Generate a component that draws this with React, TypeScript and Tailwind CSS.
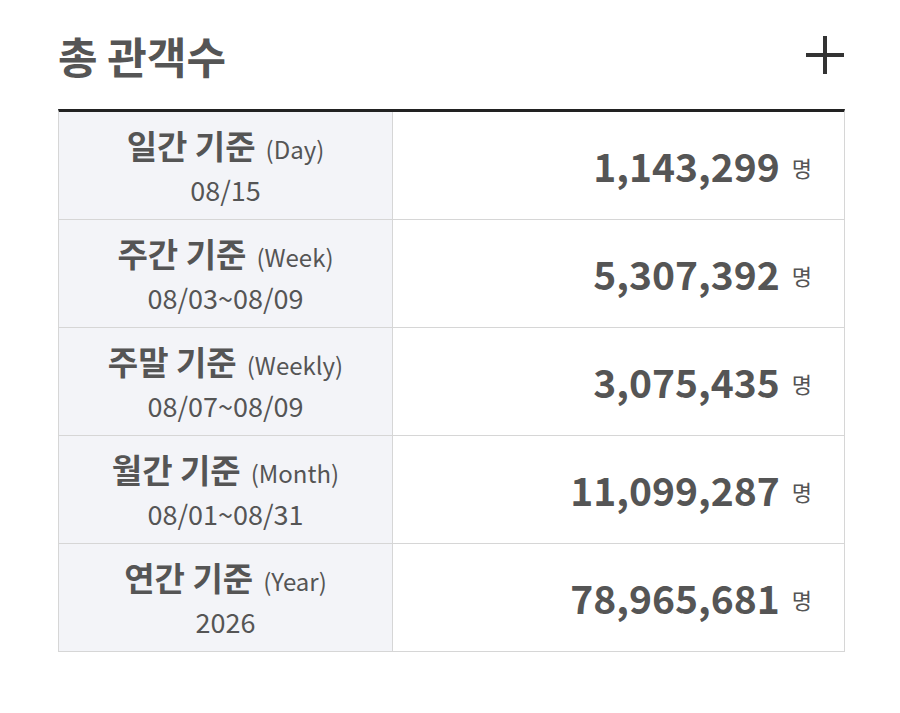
import React from "react";

const rows = [
  { ko: "일간 기준", en: "(Day)", date: "08/15", value: "1,143,299" },
  { ko: "주간 기준", en: "(Week)", date: "08/03~08/09", value: "5,307,392" },
  { ko: "주말 기준", en: "(Weekly)", date: "08/07~08/09", value: "3,075,435" },
  { ko: "월간 기준", en: "(Month)", date: "08/01~08/31", value: "11,099,287" },
  { ko: "연간 기준", en: "(Year)", date: "2026", value: "78,965,681" },
];

export default function App() {
  return (
    <div
      className="w-[900px] h-[713px] bg-white pl-[58px] pr-[55px] text-[#555]"
      style={{ fontFamily: '"Noto Sans CJK KR", "Noto Sans", sans-serif' }}
    >
      <div className="flex items-center justify-between h-[109px] pt-[1px]">
        <h1 className="text-[43px] font-bold leading-none">총 관객수</h1>
        <svg width="42" height="42" viewBox="0 0 42 42" className="mr-[-1px]">
          <path d="M21 2V40M2 21H40" stroke="#333" strokeWidth="4" />
        </svg>
      </div>
      <div className="border-t-[3px] border-t-[#222] border-x border-[#d6d6d6]">
        {rows.map((r) => (
          <div key={r.ko} className="flex h-[108px] border-b border-[#d6d6d6]">
            <div className="w-[334px] shrink-0 bg-[#f3f4f8] border-r border-[#d6d6d6] flex flex-col items-center justify-center">
              <div className="flex items-baseline leading-[42px]">
                <span className="text-[33px] font-bold">{r.ko}</span>
                <span className="text-[24px] ml-[10px]">{r.en}</span>
              </div>
              <div className="text-[27px] leading-[36px] mt-[2px]">{r.date}</div>
            </div>
            <div className="flex-1 flex items-center justify-end pr-[32px]">
              <span className="text-[39px] font-bold leading-none">{r.value}</span>
              <span className="text-[22px] ml-[12px] mt-[4px]">명</span>
            </div>
          </div>
        ))}
      </div>
    </div>
  );
}
